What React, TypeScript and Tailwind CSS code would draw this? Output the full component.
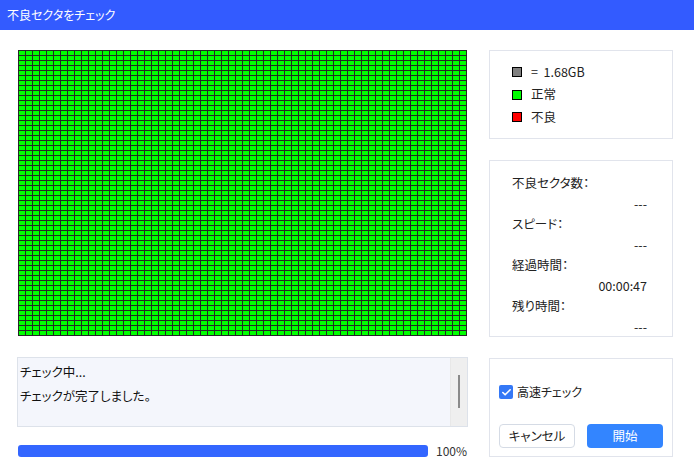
import { Check } from 'lucide-react'

const COLS = 64
const ROWS = 57

function SectorGrid() {
  const cells = Array.from({ length: COLS * ROWS })
  return (
    <div className="grid grid-cols-[repeat(64,6px)] grid-rows-[repeat(57,4px)] gap-px p-px bg-[#262626] w-[449px] h-[286px]">
      {cells.map((_, i) => (
        <div key={i} className="bg-[#00ff00]" />
      ))}
    </div>
  )
}

function Legend() {
  const items = [
    { color: 'bg-[#808080]', label: '=  1.68GB' },
    { color: 'bg-[#00ff00]', label: '正常' },
    { color: 'bg-[#ff0000]', label: '不良' },
  ]
  return (
    <div className="h-[89px] border border-[#e1e4ec] pt-[10px] pl-[22px]">
      {items.map((it) => (
        <div key={it.label} className="flex items-center h-[22.5px] gap-[9px]">
          <span className={`w-[10px] h-[10px] border border-black ${it.color}`} />
          <span className="text-[12.5px] text-[#222] whitespace-pre">{it.label}</span>
        </div>
      ))}
    </div>
  )
}

function Stats() {
  const rows = [
    { label: '不良セクタ数：', value: '---' },
    { label: 'スピード：', value: '---' },
    { label: '経過時間：', value: '00:00:47' },
    { label: '残り時間：', value: '---' },
  ]
  return (
    <div className="h-[177px] border border-[#e1e4ec] pt-[12px] pl-[22px] pr-[25px] text-[12.5px] text-[#222] leading-[20.5px]">
      {rows.map((r) => (
        <div key={r.label}>
          <div>{r.label}</div>
          <div className="text-right">{r.value}</div>
        </div>
      ))}
    </div>
  )
}

function Options() {
  return (
    <div className="h-[99px] border border-[#e1e4ec] pl-[9px] pr-[9px] flex flex-col">
      <label className="flex items-center gap-[4px] mt-[26px] h-[14px]">
        <span className="w-[14px] h-[14px] rounded-[2px] bg-[#3478f6] flex items-center justify-center">
          <Check className="w-[11px] h-[11px] text-white" strokeWidth={3.5} />
        </span>
        <span className="text-[12px] text-[#222]">高速チェック</span>
      </label>
      <div className="flex gap-[12px] mt-auto mb-[8px]">
        <button className="w-[76px] h-[24px] rounded-[4px] border border-[#d5dbe5] bg-white text-[12.5px] text-[#222]">
          キャンセル
        </button>
        <button className="w-[76px] h-[24px] rounded-[4px] bg-[#3385ff] text-[12.5px] text-white">
          開始
        </button>
      </div>
    </div>
  )
}

export default function App() {
  return (
    <div className='w-[694px] h-[471px] bg-white overflow-hidden font-["Noto_Sans_CJK_JP","Noto_Sans",sans-serif] [font-feature-settings:"palt"]'>
      {/* Title bar */}
      <div className="h-[30px] bg-[#335bff] flex items-center pl-[7px] text-white text-[12px]">
        不良セクタをチェック
      </div>

      <div className="flex pt-[20px] pl-[18px] gap-[21px]">
        {/* Left column */}
        <div className="w-[450px] flex flex-col">
          <SectorGrid />

          <div className="mt-[21px] -ml-px h-[70px] border border-[#dde2ea] bg-[#f4f6fc] flex">
            <div className="flex-1 pl-[2px] pt-[2px] text-[12.5px] text-[#111] leading-[24px]">
              <div>チェック中...</div>
              <div>チェックが完了しました。</div>
            </div>
            <div className="w-[17px] bg-[#efefef] border-l border-[#e8e8e8] flex justify-center pt-[17px]">
              <div className="w-[2px] h-[33px] bg-[#8a8a8a]" />
            </div>
          </div>

          <div className="mt-[15px] flex items-center">
            <div className="w-[410px] h-[12px] rounded-[3px] bg-[#3366ff]" />
            <span className="ml-[8px] text-[12px] text-[#333]">100%</span>
          </div>
        </div>

        {/* Right column */}
        <div className="w-[184px] flex flex-col gap-[21px]">
          <Legend />
          <Stats />
          <Options />
        </div>
      </div>
    </div>
  )
}
